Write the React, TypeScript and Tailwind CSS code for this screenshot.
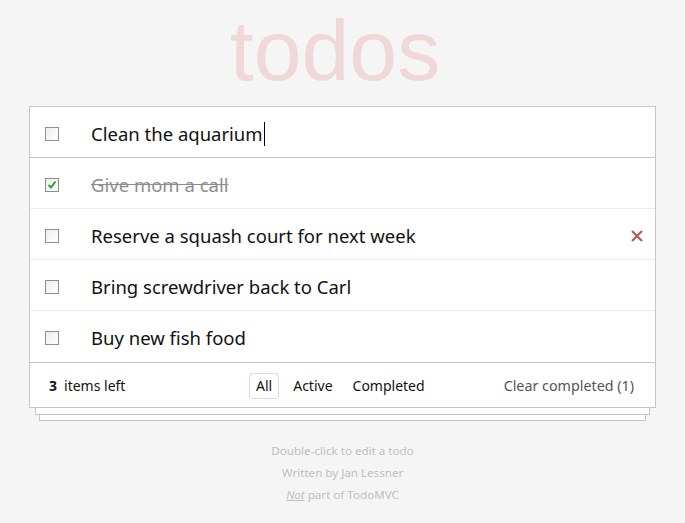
import { useState } from 'react';

interface Todo {
  id: number;
  title: string;
  completed: boolean;
}

const initialTodos: Todo[] = [
  { id: 1, title: 'Give mom a call', completed: true },
  { id: 2, title: 'Reserve a squash court for next week', completed: false },
  { id: 3, title: 'Bring screwdriver back to Carl', completed: false },
  { id: 4, title: 'Buy new fish food', completed: false },
];

function Checkbox({ checked }: { checked: boolean }) {
  return (
    <span className="w-[14px] h-[14px] border border-[#8f8f8f] bg-gradient-to-br from-[#ededed] to-white flex items-center justify-center shrink-0">
      {checked && (
        <svg width="10" height="10" viewBox="0 0 10 10">
          <path d="M1.5 5 L4 7.5 L8.5 1.5" fill="none" stroke="#2fa52f" strokeWidth="2" />
        </svg>
      )}
    </span>
  );
}

export default function App() {
  const [todos] = useState(initialTodos);
  const left = todos.filter((t) => !t.completed).length;
  const done = todos.length - left;

  return (
    <div className="min-h-[523px] bg-[#f5f5f5] flex flex-col items-center font-['Noto_Sans',sans-serif] text-[#111]">
      <h1 className="h-[106px] pt-[5px] pr-[15px] text-[86px] leading-[90px] font-['Liberation_Sans',sans-serif] text-[#f0d8d8]">
        todos
      </h1>

      <div className="w-[627px] flex flex-col">
        <div className="bg-white border border-[#c6c6c6] flex flex-col">
          {/* new todo input */}
          <div className="h-[51px] pt-[3px] flex items-center border-b border-[#c6c6c6]">
            <div className="w-[61px] pl-[15px] flex items-center">
              <Checkbox checked={false} />
            </div>
            <span className="text-[18.5px]">Clean the aquarium</span>
            <span className="w-[1px] h-[24px] bg-black ml-[1px]" />
          </div>

          {todos.map((t, i) => (
            <div
              key={t.id}
              className={`h-[51px] pt-[3px] flex items-center ${i < todos.length - 1 ? 'border-b border-[#ececec]' : ''}`}
            >
              <div className="w-[61px] pl-[15px] flex items-center">
                <Checkbox checked={t.completed} />
              </div>
              <span
                className={`flex-1 text-[18.5px] ${t.completed ? 'line-through text-[#8d8d8d]' : ''}`}
              >
                {t.title}
              </span>
              {i === 1 && (
                <svg width="12" height="12" viewBox="0 0 12 12" className="mr-[12px]">
                  <path d="M1 1 L11 11 M11 1 L1 11" stroke="#af5b5e" strokeWidth="2.2" />
                </svg>
              )}
            </div>
          ))}

          {/* footer */}
          <div className="h-[45px] pt-[1px] border-t border-[#c6c6c6] flex items-center pl-[19px] pr-[21px] text-[14px]">
            <div className="flex-1 flex items-center">
              <span className="font-bold mr-[7px]">{left}</span>
              <span>items left</span>
            </div>
            <div className="flex items-center gap-[6px] mr-[73px]">
              <span className="px-[6px] h-[26px] flex items-center border border-[#ebd4d4] rounded-[3px]">All</span>
              <span className="px-[8px]">Active</span>
              <span className="px-[6px]">Completed</span>
            </div>
            <span className="text-[#555] text-[14.3px]">Clear completed ({done})</span>
          </div>
        </div>
        <div className="mx-[6px] h-[7px] bg-white border border-t-0 border-[#c6c6c6]" />
        <div className="mx-[10px] h-[6px] bg-white border border-t-0 border-[#c6c6c6]" />
      </div>

      <div className="mt-[19px] flex flex-col items-center text-[11.6px] leading-[22px] text-[#bfbfbf]">
        <p>Double-click to edit a todo</p>
        <p>Written by Jan Lessner</p>
        <p>
          <span className="italic underline">Not</span> part of TodoMVC
        </p>
      </div>
    </div>
  );
}
